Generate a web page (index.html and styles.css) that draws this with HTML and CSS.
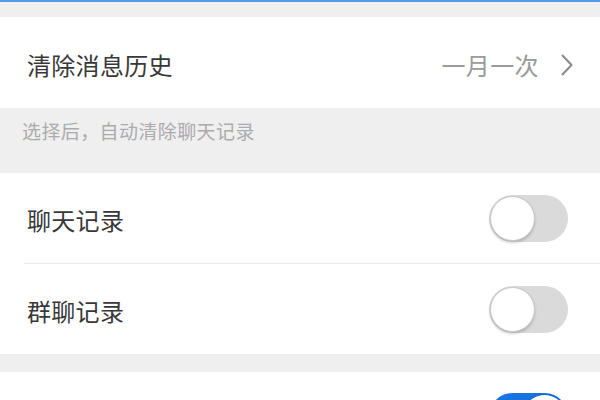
FILE: index.html
```html
<!DOCTYPE html>
<html lang="zh-CN">
<head>
<meta charset="utf-8">
<title>清除消息历史</title>
<link rel="stylesheet" href="styles.css">
</head>
<body>
<div class="screen">
  <div class="topline"></div>
  <div class="gap gap-top"></div>
  <div class="row row-link">
    <span class="title">清除消息历史</span>
    <span class="value">一月一次</span>
    <svg class="chev" width="12" height="22" viewBox="0 0 12 22"><polyline points="1.5,1.5 10.5,11 1.5,20.5" fill="none" stroke="#8a8a8a" stroke-width="2" stroke-linecap="round" stroke-linejoin="round"/></svg>
  </div>
  <div class="note">选择后，自动清除聊天记录</div>
  <div class="group">
    <div class="row">
      <span class="title">聊天记录</span>
      <span class="toggle"><span class="knob"></span></span>
    </div>
    <div class="divider"></div>
    <div class="row">
      <span class="title">群聊记录</span>
      <span class="toggle"><span class="knob"></span></span>
    </div>
  </div>
  <div class="gap gap-mid"></div>
  <div class="row row-last">
    <span class="title"></span>
    <span class="toggle on"><span class="knob"></span></span>
  </div>
</div>
</body>
</html>
```

FILE: styles.css
```css
html, body {
  margin: 0;
  padding: 0;
  background: #ffffff;
}
body {
  font-family: "Noto Sans CJK SC", "Noto Sans", sans-serif;
  color: #333333;
  overflow: hidden;
}
.screen {
  width: 600px;
  height: 400px;
  display: flex;
  flex-direction: column;
  overflow: hidden;
}
.topline {
  height: 2px;
  background: #4f9be6;
  flex: none;
}
.gap {
  background: #efeff0;
  flex: none;
}
.gap-top { height: 15px; }
.gap-mid { height: 18px; }
.row {
  height: 90px;
  flex: none;
  display: flex;
  align-items: center;
  padding: 0 32px 0 27px;
  background: #ffffff;
}
.row-link {
  height: 91px;
  padding-right: 27px;
}
.title {
  flex: 1;
  font-size: 24px;
  line-height: 30px;
  color: #383838;
  padding-top: 4px;
  letter-spacing: 0.3px;
}
.value {
  font-size: 24px;
  line-height: 30px;
  color: #9a9a9a;
  margin-right: 22px;
  padding-top: 4px;
  letter-spacing: 0.4px;
}
.chev {
  display: block;
  margin-top: 4px;
}
.note {
  height: 65px;
  flex: none;
  background: #efeff0;
  padding: 10px 0 0 22px;
  box-sizing: border-box;
  font-size: 19px;
  line-height: 26px;
  color: #ababab;
  letter-spacing: 0.4px;
}
.divider {
  height: 1px;
  margin-left: 24px;
  background: #e9e9e9;
}
.toggle {
  width: 79px;
  height: 47px;
  border-radius: 24px;
  background: #dadada;
  display: flex;
  align-items: center;
  justify-content: flex-start;
  box-sizing: border-box;
  padding: 0 1px;
  flex: none;
}
.knob {
  width: 45px;
  height: 45px;
  border-radius: 50%;
  background: #ffffff;
  box-sizing: border-box;
  border: 1px solid #c8c8c8;
  box-shadow: 0 2px 3px rgba(0, 0, 0, 0.18);
}
.toggle.on {
  background: #1673e0;
  justify-content: flex-end;
}
.toggle.on .knob {
  border-color: #1260c4;
}
.row-last {
  align-items: flex-start;
  padding-top: 21px;
  box-sizing: border-box;
}
```
